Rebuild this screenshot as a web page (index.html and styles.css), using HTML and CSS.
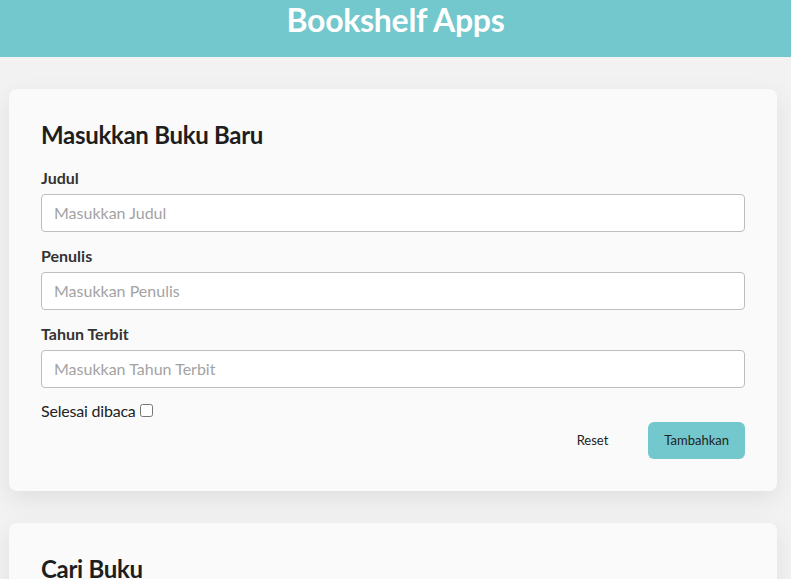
FILE: index.html
```html
<!DOCTYPE html>
<html lang="id">
<head>
<meta charset="utf-8">
<title>Bookshelf Apps</title>
<link rel="stylesheet" href="styles.css">
</head>
<body>
<header class="app-header">
  <h1 class="app-title">Bookshelf Apps</h1>
</header>
<main class="main">
  <section class="card">
    <h2 class="card-title">Masukkan Buku Baru</h2>
    <form class="form">
      <div class="field">
        <label class="label" for="judul">Judul</label>
        <input class="input" id="judul" type="text" placeholder="Masukkan Judul">
      </div>
      <div class="field">
        <label class="label" for="penulis">Penulis</label>
        <input class="input" id="penulis" type="text" placeholder="Masukkan Penulis">
      </div>
      <div class="field">
        <label class="label" for="tahun">Tahun Terbit</label>
        <input class="input" id="tahun" type="number" placeholder="Masukkan Tahun Terbit">
      </div>
      <div class="check-row">
        <label class="check-label" for="selesai">Selesai dibaca</label><input class="checkbox" id="selesai" type="checkbox">
      </div>
      <div class="actions">
        <button class="btn btn-plain" type="reset">Reset</button>
        <button class="btn btn-primary" type="button">Tambahkan</button>
      </div>
    </form>
  </section>
  <section class="card">
    <h2 class="card-title">Cari Buku</h2>
  </section>
</main>
</body>
</html>
```
FILE: styles.css
```css
* { box-sizing: border-box; }
html, body { margin: 0; padding: 0; }
body {
  background: #f2f2f2;
  font-family: Lato, "Noto Sans", sans-serif;
  color: #222;
  font-size: 16px;
  overflow: hidden;
}
.app-header {
  background: #72c8cc;
  height: 57px;
  display: flex;
  justify-content: center;
  padding-top: 1px;
}
.app-title {
  margin: 0;
  color: #fff;
  font-size: 32px;
  line-height: 1.2;
  font-weight: 700;
  letter-spacing: -0.3px;
}
.main {
  display: flex;
  flex-direction: column;
  gap: 32px;
  padding: 32px 0 0 9px;
  width: 777px;
}
.card {
  background: #fafafa;
  border-radius: 8px;
  padding: 32px;
  box-shadow: 0 8px 24px rgba(0, 0, 0, 0.08);
}
.card-title {
  margin: 0;
  font-size: 24px;
  line-height: 1.2;
  font-weight: 700;
  color: #1e1e1e;
  letter-spacing: -0.3px;
}
.form {
  display: flex;
  flex-direction: column;
  margin-top: 18px;
}
.field {
  display: flex;
  flex-direction: column;
  gap: 7px;
  margin-bottom: 14px;
}
.label {
  font-weight: 700;
  line-height: 19px;
  color: #333;
}
.input {
  height: 38px;
  border: 1px solid #bdbdbd;
  border-radius: 4px;
  background: #fff;
  padding: 0 12px;
  font-family: inherit;
  font-size: 16px;
  color: #222;
}
.input::placeholder { color: #a3a3a3; }
.check-row {
  display: flex;
  align-items: center;
  line-height: 19px;
  margin-top: -1px;
}
.check-label { color: #222; letter-spacing: -0.2px; }
.checkbox {
  margin: 0 0 0 4px;
  width: 13px;
  height: 13px;
}
.actions {
  display: flex;
  justify-content: flex-end;
  gap: 24px;
  margin-top: 2px;
}
.btn {
  height: 37px;
  padding: 0 16px;
  border: none;
  border-radius: 6px;
  font-family: inherit;
  font-size: 13px;
  color: #222;
}
.btn-plain { background: transparent; }
.btn-primary { background: #72c8cc; }
```
